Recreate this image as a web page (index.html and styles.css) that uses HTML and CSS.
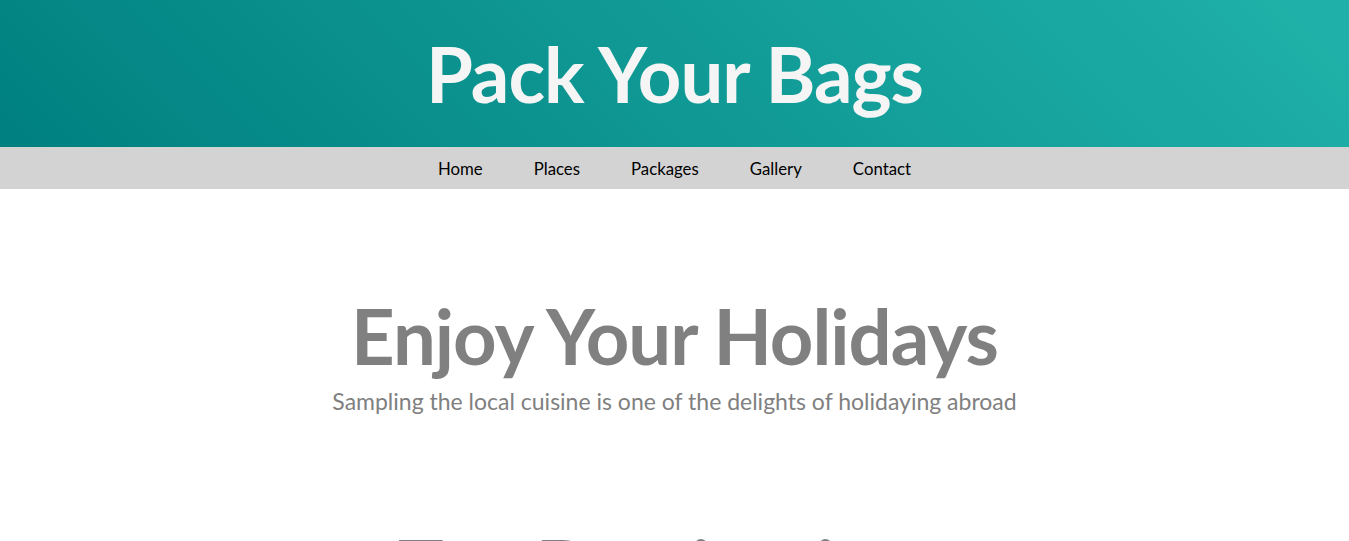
FILE: index.html
```html
<!DOCTYPE html>
<html lang="en">
<head>
  <meta charset="UTF-8" />
  <meta name="viewport" content="width=device-width, initial-scale=1.0" />
  <title>Pack Your Bags</title>
  <link rel="stylesheet" href="styles.css">
</head>
<body>
  <header class="banner">
    <h1>Pack Your Bags</h1>
  </header>
  <nav class="menu">
    <a href="#">Home</a>
    <a href="#">Places</a>
    <a href="#">Packages</a>
    <a href="#">Gallery</a>
    <a href="#">Contact</a>
  </nav>

  <section class="intro">
    <h2>Enjoy Your Holidays</h2>
    <p>Sampling the local cuisine is one of the delights of holidaying abroad</p>
  </section>

  <section class="places">
    <h2>Top Destinations</h2>
  </section>
</body>
</html>
```

FILE: styles.css
```css
body {
  margin: 0;
  font-family: Lato, "Open Sans", sans-serif;
  background: white;
}
.banner {
  height: 147px;
  display: flex;
  align-items: center;
  justify-content: center;
  background: linear-gradient(45deg, #008080, #20b2aa);
}
.banner h1 {
  margin: 0;
  color: whitesmoke;
  font-size: 76px;
  font-weight: bold;
  letter-spacing: -1px;
}
.menu {
  height: 42px;
  display: flex;
  justify-content: center;
  align-items: center;
  background: lightgray;
}
.menu a {
  padding: 0 25.5px;
  color: black;
  text-decoration: none;
  font-size: 16.8px;
}
.intro {
  padding-top: 104px;
  text-align: center;
  color: gray;
}
.intro h2 {
  margin: 0;
  font-size: 76px;
  line-height: 86px;
  letter-spacing: -1px;
}
.intro p {
  margin: 0;
  padding-top: 7px;
  font-size: 23px;
  line-height: 30px;
}
.places {
  padding-top: 105px;
  text-align: center;
  color: gray;
}
.places h2 {
  margin: 0;
  font-size: 76px;
  letter-spacing: -1px;
}
```
